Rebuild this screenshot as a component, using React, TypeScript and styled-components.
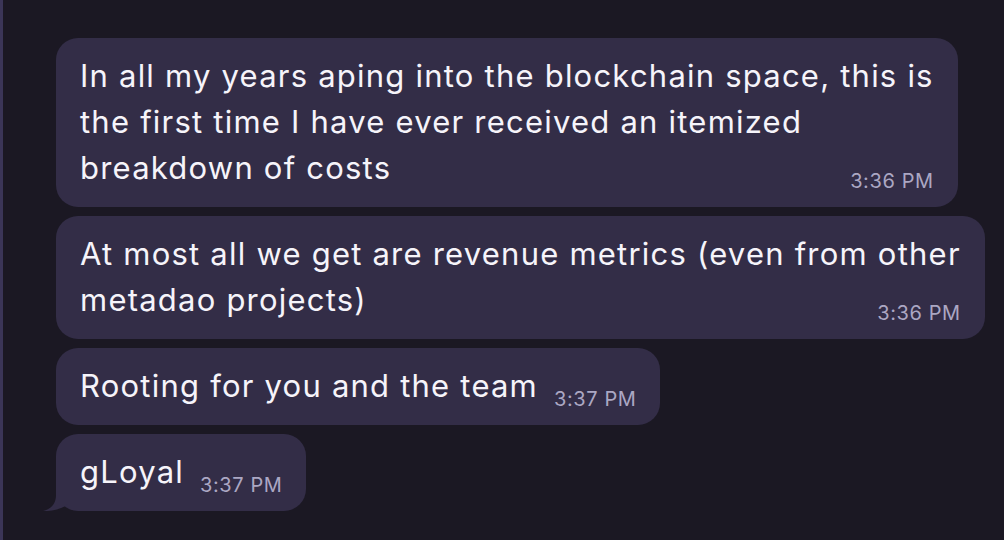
import React from "react";
import styled, { createGlobalStyle } from "styled-components";

const GlobalStyle = createGlobalStyle`
  html, body {
    margin: 0;
    padding: 0;
    background: #1b1823;
  }
  body {
    font-family: Inter, "Noto Sans", "Liberation Sans", sans-serif;
    -webkit-font-smoothing: antialiased;
  }
`;

const Screen = styled.div`
  min-height: 540px;
  box-sizing: border-box;
  border-left: 3px solid #3b3557;
  padding: 38px 0 0 53px;
  display: flex;
  flex-direction: column;
  align-items: flex-start;
  gap: 9px;
`;

const Bubble = styled.div`
  position: relative;
  display: flow-root;
  background: #332d47;
  border-radius: 22px;
  padding: 15px 24px 16px;
  color: #f6f4fa;
  font-size: 31px;
  letter-spacing: 1.22px;
  line-height: 46px;
  white-space: nowrap;
`;

const Time = styled.span`
  float: right;
  margin: 26px 0 0 16px;
  font-size: 20px;
  letter-spacing: 0.6px;
  line-height: 20px;
  color: #aba7c3;
`;

const Tail = styled.svg`
  position: absolute;
  left: -13px;
  bottom: 0;
  width: 26px;
  height: 36px;
`;

type Message = {
  lines: string[];
  time: string;
  tail?: boolean;
};

const messages: Message[] = [
  {
    lines: [
      "In all my years aping into the blockchain space, this is",
      "the first time I have ever received an itemized",
      "breakdown of costs",
    ],
    time: "3:36 PM",
  },
  {
    lines: [
      "At most all we get are revenue metrics (even from other",
      "metadao projects)",
    ],
    time: "3:36 PM",
  },
  { lines: ["Rooting for you and the team"], time: "3:37 PM" },
  { lines: ["gLoyal"], time: "3:37 PM", tail: true },
];

const MessageBubble: React.FC<{ message: Message }> = ({ message }) => (
  <Bubble>
    {message.lines.map((line, i) => (
      <React.Fragment key={i}>
        {i > 0 && <br />}
        {line}
      </React.Fragment>
    ))}
    <Time>{message.time}</Time>
    {message.tail && (
      <Tail viewBox="0 0 26 36">
        <path
          d="M13 0 L13 20 C13 29 8 34 0 36 C8 36 18 35 25 29 L25 0 Z"
          fill="#332d47"
        />
      </Tail>
    )}
  </Bubble>
);

const App: React.FC = () => (
  <>
    <GlobalStyle />
    <Screen>
      {messages.map((m, i) => (
        <MessageBubble key={i} message={m} />
      ))}
    </Screen>
  </>
);

export default App;
